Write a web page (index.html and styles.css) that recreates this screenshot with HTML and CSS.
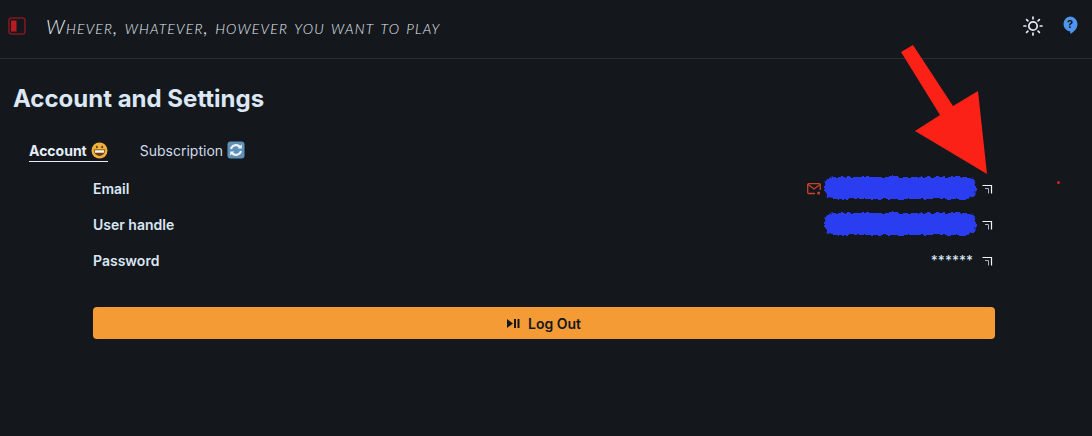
FILE: index.html
```html
<!DOCTYPE html>
<html lang="en">
<head>
<meta charset="utf-8">
<title>Account and Settings</title>
<link rel="stylesheet" href="styles.css">
</head>
<body>
<svg class="defs" width="0" height="0">
  <defs>
    <filter id="rough" x="-5%" y="-20%" width="110%" height="140%">
      <feTurbulence type="fractalNoise" baseFrequency="0.22" numOctaves="2" seed="4"/>
      <feDisplacementMap in="SourceGraphic" scale="5" xChannelSelector="R" yChannelSelector="G"/>
    </filter>
    <path id="corner" d="M.5 1.500h9v8" fill="none" stroke="#eef3f8" stroke-width="1.200"/>
    <path id="corner-inner" d="M3 4.500h3.500v5" fill="none" stroke="#aab3bd" stroke-width="1"/>
  </defs>
</svg>

<header class="topbar">
  <svg class="sidebar-icon" width="18" height="18" viewBox="0 0 18 18"><rect x="1" y="1" width="16" height="16" rx="2.5" fill="none" stroke="#7d1a20" stroke-width="1.6"/><rect x="3" y="3.500" width="5.500" height="11" fill="#b81c22"/></svg>
  <div class="tagline">Whever, whatever, however you want to play</div>
  <svg class="sun" width="20" height="20" viewBox="0 0 20 20" fill="none" stroke="#e4ecf5" stroke-width="1.700" stroke-linecap="round"><circle cx="10" cy="10" r="4.200"/><path d="M10 1v1.800M10 17.200V19M1 10h1.800M17.200 10H19M3.600 3.600l1.300 1.300M15.100 15.100l1.300 1.300M3.600 16.400l1.300-1.300M15.100 4.900l1.300-1.300"/></svg>
  <svg class="help" width="16" height="18" viewBox="0 0 16 18"><path d="M8 .5a7.500 7.500 0 0 1 7.500 7.500c0 4.400-3.200 7.600-6.400 9.400-.5.300-.9 0-.9-.5v-1.500A7.500 7.500 0 0 1 8 .5z" fill="#4f95ee"/><text x="8" y="12" text-anchor="middle" class="help-mark">?</text></svg>
</header>

<main class="page">
  <h1 class="title">Account and Settings</h1>

  <nav class="tabs">
    <a class="tab tab-active">Account
      <svg class="emoji" width="17" height="17" viewBox="0 0 17 17"><circle cx="8.500" cy="8.500" r="8" fill="#f0b13c"/><path d="M2.800 7.600h11.400c.2 3.600-2.400 6.300-5.700 6.300S2.600 11.200 2.800 7.600z" fill="#6b3d12"/><path d="M3.600 8.300h9.800l-.4 2.400H4z" fill="#f4f4f0"/><ellipse cx="5.800" cy="5" rx="1" ry="1.300" fill="#6b3d12"/><ellipse cx="11.200" cy="5" rx="1" ry="1.300" fill="#6b3d12"/></svg>
    </a>
    <a class="tab">Subscription
      <svg class="emoji" width="18" height="18" viewBox="0 0 18 18"><rect x=".5" y=".5" width="17" height="17" rx="3" fill="#5f91b8"/><path d="M4 8a5.200 5.200 0 0 1 9-2" fill="none" stroke="#eef3f7" stroke-width="2"/><path d="M14 10a5.200 5.200 0 0 1-9 2" fill="none" stroke="#eef3f7" stroke-width="2"/><path d="M14.800 3.200v4.300h-4.300zM3.200 14.800v-4.300h4.300z" fill="#eef3f7"/></svg>
    </a>
  </nav>

  <section class="settings">
    <div class="row">
      <span class="label">Email</span>
      <span class="value">
        <svg class="mail" width="14" height="12" viewBox="0 0 14 12" fill="none" stroke="#c9432a" stroke-width="1.300"><path d="M8 10.500H1.700a1 1 0 0 1-1-1V1.700a1 1 0 0 1 1-1h10.600a1 1 0 0 1 1 1V7"/><path d="M1 1.500l6 4.500 6-4.500"/><rect x="10.300" y="8.800" width="2.600" height="2.600" fill="#c9432a" stroke="none"/></svg>
        <svg class="scribble" width="156" height="28" viewBox="0 0 156 28"><rect x="2" y="3" width="152" height="22" rx="9" fill="#2b3df0" filter="url(#rough)"/></svg>
      </span>
      <svg class="link" width="11" height="11" viewBox="0 0 11 11"><use href="#corner"/><use href="#corner-inner"/></svg>
    </div>
    <div class="row">
      <span class="label">User handle</span>
      <span class="value">
        <svg class="scribble" width="156" height="28" viewBox="0 0 156 28"><rect x="2" y="3" width="152" height="22" rx="9" fill="#2b3df0" filter="url(#rough)"/></svg>
      </span>
      <svg class="link" width="11" height="11" viewBox="0 0 11 11"><use href="#corner"/><use href="#corner-inner"/></svg>
    </div>
    <div class="row">
      <span class="label">Password</span>
      <span class="value value-text">******</span>
      <svg class="link" width="11" height="11" viewBox="0 0 11 11"><use href="#corner"/><use href="#corner-inner"/></svg>
    </div>

    <button class="logout">
      <svg width="13" height="9" viewBox="0 0 13 9" fill="#14181d"><path d="M0 0l6 4.500L0 9z"/><rect x="7" y="0" width="2" height="9"/><rect x="10.500" y="0" width="2" height="9"/></svg>
      Log Out
    </button>
  </section>
</main>

<svg class="arrow" width="100" height="140" viewBox="0 0 100 140"><polygon points="1,8 13,1 53,62 78,47 87,130 15,87 40,71" fill="#fb2116"/></svg>
<span class="dot"></span>
</body>
</html>
```

FILE: styles.css
```css
* { box-sizing: border-box; }
html, body { margin: 0; height: 100%; }
body {
  position: relative;
  background: #14181c;
  color: #dbe7f5;
  font-family: Inter, "Liberation Sans", sans-serif;
  overflow: hidden;
}
.defs { position: absolute; }
.topbar {
  height: 59px;
  display: flex;
  align-items: center;
  padding: 0 13px 6px 8px;
  border-bottom: 1px solid #2a2e33;
}
.tagline {
  flex: 1;
  margin-left: 20px;
  font-family: Lato, sans-serif;
  font-weight: 300;
  font-style: italic;
  font-variant: small-caps;
  font-size: 20px;
  letter-spacing: 1.170px;
  color: #e6eef7;
}
.sun { margin-right: 19px; }
.help { margin-top: -2px; margin-right: 1px; }
.help-mark { font: 700 11px Inter, sans-serif; fill: #14181d; }
.page { padding: 0 0 0 13px; }
.title {
  margin: 25px 0 0;
  font-size: 24px;
  line-height: 30px;
  font-weight: 700;
  color: #dbe7f5;
}
.tabs {
  display: flex;
  gap: 32px;
  margin: 26px 0 0 16px;
  height: 24px;
}
.tab {
  display: flex;
  align-items: center;
  gap: 4px;
  height: 24px;
  font-size: 14px;
  color: #cfdbe9;
  padding-bottom: 4px;
}
.tab-active {
  height: 22px;
  font-weight: 700;
  color: #e4eef9;
  border-bottom: 1.500px solid #e4eef9;
  padding-bottom: 1px;
}
.settings { margin: 6px 0 0 80px; width: 902px; }
.row {
  height: 36px;
  display: flex;
  align-items: center;
  font-size: 14px;
  padding-right: 2px;
}
.label { flex: 1; font-weight: 600; color: #dbe7f5; }
.value {
  display: flex;
  align-items: center;
  gap: 1px;
  font-weight: 500;
  color: #dbe7f5;
  margin-right: 4px;
}
.value-text { margin-right: 9px; font-size: 13.500px; }
.scribble { display: block; }
.mail { margin-top: 1px; }
.link { margin-top: 2px; }
.logout {
  margin-top: 29px;
  width: 100%;
  height: 32px;
  display: flex;
  justify-content: center;
  align-items: center;
  gap: 8px;
  border: 0;
  border-radius: 4px;
  background: #f49b36;
  color: #14181d;
  font: 600 14px Inter, sans-serif;
}
.arrow { position: absolute; left: 900px; top: 44px; }
.dot {
  position: absolute;
  left: 1057px;
  top: 181px;
  width: 3px;
  height: 3px;
  border-radius: 50%;
  background: #e0201c;
}
```
